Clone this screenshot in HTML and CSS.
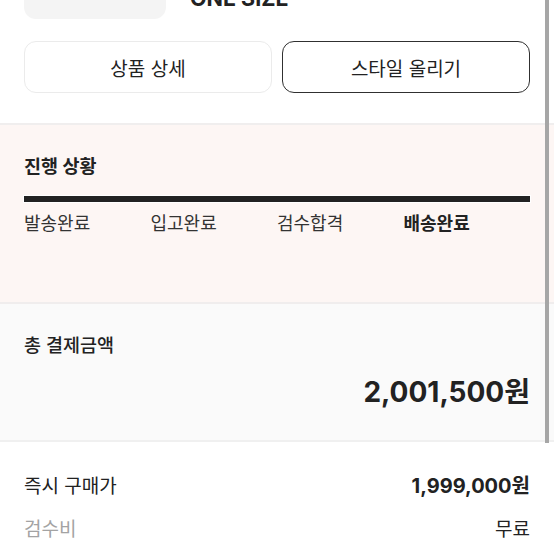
FILE: index.html
```html
<!DOCTYPE html>
<html>

<head>
    <link rel="stylesheet" href="styles.css">
</head>

<body>

    <div class="page">
        <div class="scroll-thumb"></div>

        <div class="product">
            <div class="product-thumb"></div>
            <div class="product-size">ONE SIZE</div>
        </div>

        <div class="actions">
            <a href="#" class="btn">상품 상세</a>
            <a href="#" class="btn btn-dark">스타일 올리기</a>
        </div>

        <section class="progress">
            <h2 class="section-title">진행 상황</h2>
            <div class="progress-bar"></div>
            <ul class="steps">
                <li class="step">발송완료</li>
                <li class="step">입고완료</li>
                <li class="step">검수합격</li>
                <li class="step step-current">배송완료</li>
            </ul>
        </section>

        <section class="total">
            <h2 class="total-title">총 결제금액</h2>
            <div class="total-price">2,001,500원</div>
        </section>

        <section class="detail">
            <div class="detail-row">
                <span class="detail-label">즉시 구매가</span>
                <span class="detail-value detail-strong">1,999,000원</span>
            </div>
            <div class="detail-row">
                <span class="detail-label detail-muted">검수비</span>
                <span class="detail-value">무료</span>
            </div>
        </section>
    </div>

</body>

</html>
```

FILE: styles.css
```css
body {
    margin: 0;
    background: #fff;
    font-family: Inter, "Noto Sans CJK KR", sans-serif;
    color: #222;
}

.page {
    position: relative;
    width: 554px;
    overflow: hidden;
}

/* 오른쪽 스크롤 막대 */
.scroll-thumb {
    position: absolute;
    top: 0;
    left: 545px;
    width: 4px;
    height: 443px;
    background: #a6a6a6;
}

/* 상품 */
.product {
    height: 19px;
    padding: 0 24px;
    display: flex;
    align-items: flex-end;
    gap: 24px;
    overflow: hidden;
}

.product-thumb {
    flex: none;
    width: 142px;
    height: 80px;
    background: #f4f4f4;
    border-radius: 12px;
}

.product-size {
    font-size: 21.5px;
    font-weight: 700;
    line-height: 20px;
    padding-bottom: 11px;
}

/* 버튼 */
.actions {
    display: flex;
    gap: 10px;
    padding: 22px 24px 30px;
}

.btn {
    flex: 1;
    height: 52px;
    box-sizing: border-box;
    display: flex;
    align-items: center;
    justify-content: center;
    border: 1px solid #ebebeb;
    border-radius: 12px;
    color: #222;
    font-size: 19px;
    text-decoration: none;
}

.btn-dark {
    border: 1.5px solid #303030;
}

/* 진행 상황 */
.progress {
    background: #fdf6f4;
    border-top: 2px solid #f0eeee;
    padding: 29px 24px 0;
    height: 179px;
    box-sizing: border-box;
}

.section-title {
    margin: 0;
    font-size: 18.5px;
    font-weight: 700;
    line-height: 24px;
}

.progress-bar {
    margin-top: 18px;
    height: 6px;
    background: #222;
    box-shadow: 0 0 0 1px #fff;
}

.steps {
    list-style: none;
    margin: 10px 0 0;
    padding: 0;
    display: grid;
    grid-template-columns: repeat(4, 1fr);
}

.step {
    font-size: 18px;
    line-height: 24px;
    color: #333;
}

.step-current {
    font-weight: 700;
    color: #222;
}

/* 총 결제금액 */
.total {
    background: #fafafa;
    border-top: 2px solid #f0eded;
    border-bottom: 2px solid #f0f0f0;
    padding: 29px 24px 0;
    height: 140px;
    box-sizing: border-box;
}

.total-title {
    margin: 0;
    font-size: 18.5px;
    font-weight: 500;
    line-height: 24px;
}

.total-price {
    margin-top: 17px;
    text-align: right;
    font-size: 28px;
    font-weight: 700;
    line-height: 36px;
}

/* 결제 상세 */
.detail {
    padding: 29px 24px 0;
}

.detail-row {
    display: flex;
    justify-content: space-between;
    align-items: center;
    height: 26px;
    margin-bottom: 17px;
    font-size: 19px;
}

.detail-muted {
    color: #a3a3a3;
}

.detail-strong {
    font-weight: 700;
    font-size: 20px;
}
```
